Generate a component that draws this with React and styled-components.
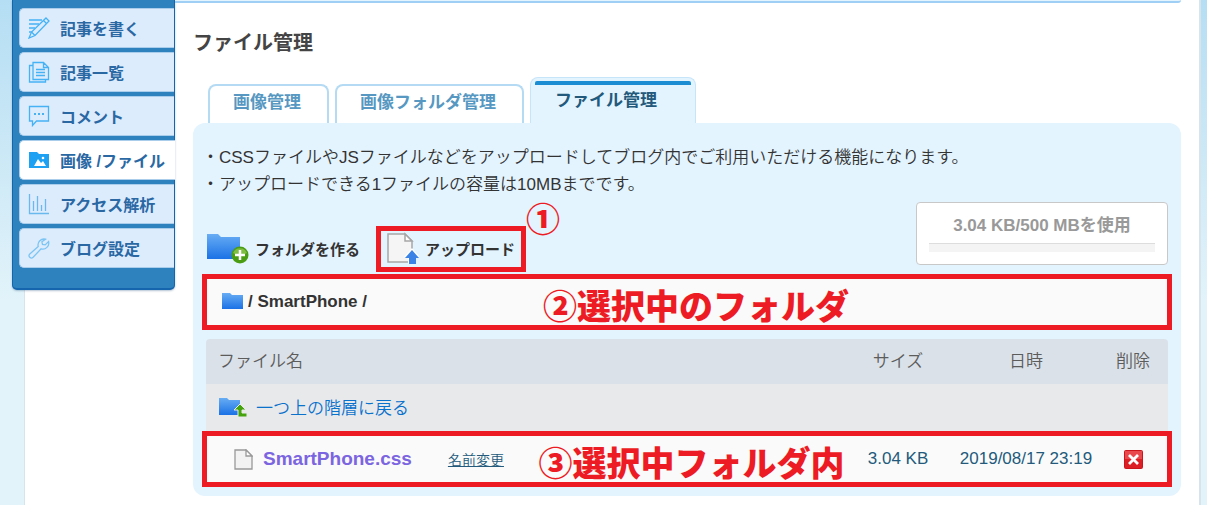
import styled, { createGlobalStyle } from "styled-components";

const GlobalStyle = createGlobalStyle`
  * {
    box-sizing: border-box;
  }
  body {
    margin: 0;
    background: #e2f3fa;
    color: #333;
    font-family: "Liberation Sans", "Noto Sans CJK JP", sans-serif;
    font-size: 17px;
    font-weight: 350;
  }
`;

const Page = styled.div`
  padding: 0 6px 0 24px;
  background: linear-gradient(#b5def4, #cbe8f6 150px, #e2f3fa 300px);
`;
const Sheet = styled.div`
  display: flex;
  align-items: flex-start;
  min-height: 100vh;
  background: #fff;
  border-right: 2px solid #d8e4ec;
  border-left: 1px solid #d8e4ec;
`;

const Sidebar = styled.nav`
  flex: none;
  width: 163px;
  margin-left: -13px;
  padding: 8px 0 20px 6px;
  background: #2e82be;
  border: solid #1565ae;
  border-width: 0 1px 2px;
  border-radius: 0 0 5px 5px;
  box-shadow: 0 1px 2px rgba(0, 60, 110, 0.3);
`;
const Menu = styled.ul`
  display: flex;
  flex-direction: column;
  gap: 4px;
  margin: 0;
  padding: 0;
  list-style: none;
`;
const MenuLink = styled.a`
  display: flex;
  align-items: center;
  gap: 10px;
  height: 40px;
  margin-right: ${(props) => (props.$active ? "-1px" : "0")};
  padding-left: 8px;
  background: ${(props) => (props.$active ? "#fff" : "#ddecfd")};
  border: solid #a9cdea;
  border-width: 1px 0 1px 1px;
  border-radius: 5px 0 0 5px;
  color: #2a68a4;
  font-size: 16px;
  font-weight: bold;
  text-decoration: none;
  white-space: nowrap;
`;

const Main = styled.main`
  flex: 1;
  min-width: 0;
  padding-right: 18px;
`;
const Banner = styled.div`
  height: 3px;
  background: #e3f4ff;
  border-bottom: 2px solid #9fcff4;
  border-radius: 0 0 5px 0;
`;
const Content = styled.div`
  padding-left: 18px;
`;
const Title = styled.h1`
  margin: 26px 0 19px;
  color: #444;
  font-size: 20px;
  font-weight: bold;
  line-height: 29px;
`;

const Tabs = styled.div`
  display: flex;
  align-items: flex-end;
  gap: 6px;
  padding-left: 15px;
`;
const Tab = styled.button`
  height: 39px;
  padding: 0 26px 8px 23px;
  background: #fff;
  border: 2px solid #b5daf3;
  border-bottom: 0;
  border-radius: 8px 8px 0 0;
  color: #5798c2;
  font: inherit;
  font-weight: bold;
  white-space: nowrap;
`;
const ActiveTab = styled(Tab)`
  height: 46px;
  padding: 3px 4px 0;
  background: #e3f4ff;
  border-color: #c6e5f9;
  border-width: 1px 1px 0;
  color: #235a7c;
`;
const TabLabel = styled.span`
  display: block;
  height: 42px;
  padding: 3px 34px 0 20px;
  border-top: 4px solid #1b8dd2;
  border-radius: 2px;
  line-height: 26px;
`;

const Panel = styled.section`
  padding: 21px 13px 9px;
  background: #e3f4ff;
  border-radius: 12px;
`;
const Notes = styled.p`
  margin: 0 -4px 4px;
  line-height: 27px;
`;
const Toolbar = styled.div`
  display: flex;
  align-items: flex-end;
  margin-bottom: 2px;
`;
const ToolButton = styled.button`
  position: relative;
  display: flex;
  align-items: center;
  gap: 6px;
  height: 46px;
  padding: 0 6px 2px;
  background: none;
  border: 5px solid ${(props) => (props.$marked ? "#ed1c24" : "transparent")};
  color: #333;
  font: inherit;
  font-size: 15px;
  font-weight: bold;
  white-space: nowrap;
`;
const CreateButton = styled(ToolButton)`
  margin-right: 5px;
  padding-left: 0;
  border-width: 0 5px 0 1px;
`;
const Usage = styled.div`
  width: 252px;
  height: 63px;
  margin: 0 0 7px auto;
  padding: 9px 12px;
  background: #fff;
  border: 1px solid #c8c8c8;
  border-radius: 4px;
  color: #999;
  font-weight: bold;
  line-height: 28px;
  text-align: center;
`;
const Meter = styled.div`
  height: 9px;
  margin-top: 3px;
  background: #f4f4f4;
  border-top: 1px solid #ddd;
`;

const PathBar = styled.div`
  position: relative;
  display: flex;
  align-items: center;
  gap: 4px;
  height: 56px;
  margin: 0 -4px 9px;
  padding-left: 15px;
  background: #fafafa;
  border: 5px solid #ed1c24;
  font-weight: bold;
`;
const Callout = styled.span`
  position: absolute;
  top: ${(props) => props.$top || "4px"};
  left: ${(props) => props.$left};
  color: #ed1c24;
  font-family: "Noto Sans CJK JP", sans-serif;
  font-size: 34px;
  font-weight: 900;
  line-height: 44px;
  white-space: nowrap;
`;

const TableWrap = styled.div`
  position: relative;
`;
const RowFrame = styled.div`
  position: absolute;
  right: -4px;
  bottom: 0;
  left: -4px;
  height: 56px;
  border: 5px solid #ed1c24;
  pointer-events: none;
`;
const Table = styled.table`
  width: 100%;
  border-collapse: collapse;
  table-layout: fixed;
`;
const HeadCell = styled.th`
  width: ${(props) => props.$width || "auto"};
  height: 45px;
  padding: 0 0 4px ${(props) => (props.$width ? "0" : "12px")};
  background: #dae1e8;
  border-radius: ${(props) => props.$radius || "0"};
  color: #5c5c5c;
  font-weight: 350;
  text-align: ${(props) => (props.$width ? "center" : "left")};
`;
const UpCell = styled.td`
  height: 47px;
  padding: 0 12px 2px;
  background: #e8e9eb;
`;
const Cell = styled.td`
  height: 56px;
  padding: 0;
  background: #fafafa;
  color: #235a7c;
  text-align: center;
  white-space: nowrap;
`;
const IconLine = styled.div`
  display: flex;
  align-items: center;
  padding-left: ${(props) => props.$indent || "0"};
`;
const UpLink = styled.a`
  margin-left: 9px;
  color: #0b72cc;
  text-decoration: none;
`;
const FileLink = styled.a`
  margin: 0 36px 0 10px;
  color: #7b65e0;
  font-size: 19px;
  font-weight: bold;
  text-decoration: none;
`;
const RenameLink = styled.a`
  color: #235a7c;
  font-size: 14px;
`;
const DeleteButton = styled.button`
  padding: 0;
  background: none;
  border: 0;
  vertical-align: middle;

  svg {
    display: block;
  }
`;

const lineIcon = {
  width: 22,
  height: 22,
  viewBox: "0 0 22 22",
  fill: "none",
  stroke: "#45b2f5",
  strokeWidth: 1.3,
  "aria-hidden": true,
};

const WriteIcon = () => (
  <svg {...lineIcon}>
    <path d="M1 3h13M1 7h10M1 11h6M1 15h3" />
    <path d="M18 1l3 3L7 18.500 1 21l2.500-6z" fill="#ddecfd" />
    <path d="M15.500 3.500l3 3M3.500 15L7 18.500" />
  </svg>
);
const ListIcon = () => (
  <svg {...lineIcon}>
    <path d="M5 18.500V1.500h10.500l5 5v12zM15.500 1.500v5h5M8 8.500h9M8 11.500h9M8 14.500h9" />
    <path d="M5 4.500H1.500v16.500h16v-2.500" />
  </svg>
);
const CommentIcon = () => (
  <svg {...lineIcon}>
    <path d="M1.500 1.500h19v14.500h-12L4.500 20.500V16h-3z" />
    <path d="M6 9h2M10 9h2M14 9h2" strokeWidth="2" />
  </svg>
);
const ImageIcon = () => (
  <svg {...lineIcon} stroke="none">
    <path d="M1 3h8l2 2h10v14H1z" fill="#1ea0f3" />
    <path d="M6 17l4-7 3 4 2-2 3 5z" fill="#fff" />
    <circle cx="15" cy="9" r="1.300" fill="#fff" />
  </svg>
);
const ChartIcon = () => (
  <svg {...lineIcon} stroke="#69b9ef">
    <path d="M1.500 1v19.500H21M5.500 8v10M9.500 3v15M13.500 12v6M17.500 6v12" />
  </svg>
);
const WrenchIcon = () => (
  <svg {...lineIcon} stroke="#7cc4f3">
    <path d="M17.500 2.200a6 6 0 0 0-7.300 7.300L1.800 17a2.300 2.300 0 0 0 3.300 3.300l8-8.500a6 6 0 0 0 7.500-7.200l-3.400 3.300-2.700-.5-.6-2.600z" />
  </svg>
);

const BlueGradient = ({ id }) => (
  <linearGradient id={id} x1="0" y1="0" x2="0" y2="1">
    <stop offset="0" stopColor="#68adf4" />
    <stop offset="1" stopColor="#1b72e6" />
  </linearGradient>
);
const AddFolderIcon = () => (
  <svg width="42" height="32" viewBox="0 0 42 32" aria-hidden="true">
    <defs>
      <BlueGradient id="folderAdd" />
    </defs>
    <path d="M0 2h11l3 3h19v22H0z" fill="url(#folderAdd)" />
    <circle cx="33" cy="23" r="8.500" fill="#4a9d13" />
    <path d="M26 21a7.500 7.500 0 0 1 14 0q-7 4-14 0" fill="#7fbd43" />
    <path d="M33 18v10M28 23h10" stroke="#fff" strokeWidth="2.500" />
  </svg>
);
const UploadIcon = () => (
  <svg width="32" height="32" viewBox="0 0 32 32" aria-hidden="true">
    <path d="M1 2h17l7 7v21H1z" fill="#f5f5f5" stroke="#a6a6a6" strokeWidth="1.500" />
    <path d="M18 2v7h7z" fill="#fff" stroke="#a6a6a6" strokeWidth="1.500" />
    <path d="M25 16l-8 9h4v7h8v-7h4z" fill="#fff" />
    <path d="M25 18l-7 8h4v6h7v-6h3z" fill="#3b84e6" />
  </svg>
);
const FolderIcon = () => (
  <svg width="22" height="18" viewBox="0 0 22 18" aria-hidden="true">
    <defs>
      <BlueGradient id="folder" />
    </defs>
    <path d="M0 0h8l2 2h11v14H0z" fill="url(#folder)" />
  </svg>
);
const UpFolderIcon = () => (
  <svg width="29" height="20" viewBox="0 0 29 20" aria-hidden="true">
    <defs>
      <BlueGradient id="folderUp" />
    </defs>
    <path d="M1 1h8l2 2h11v15H1z" fill="url(#folderUp)" />
    <path d="M22 7l-6 6h4v7h9v-4h-5v-3h4z" fill="#46a30e" stroke="#e8e9eb" />
  </svg>
);
const FileIcon = () => (
  <svg width="19" height="21" viewBox="0 0 19 21" aria-hidden="true">
    <path d="M1 1h11l6 6v13H1z" fill="#f2f2f2" stroke="#999" strokeWidth="1.300" />
    <path d="M12 1v6h6z" fill="#fff" stroke="#999" strokeWidth="1.300" />
  </svg>
);
const DeleteIcon = () => (
  <svg width="19" height="19" viewBox="0 0 19 19" aria-hidden="true">
    <rect width="19" height="19" rx="2" fill="#c9151b" />
    <rect x="1" y="1" width="17" height="17" rx="1" fill="#dc1f25" />
    <path d="M1 1h17v8H1z" fill="#e9484c" />
    <path d="M5 5l9 9M14 5l-9 9" stroke="#fff" strokeWidth="2.800" />
  </svg>
);

const menu = [
  { label: "記事を書く", Icon: WriteIcon },
  { label: "記事一覧", Icon: ListIcon },
  { label: "コメント", Icon: CommentIcon },
  { label: "画像 /ファイル", Icon: ImageIcon, active: true },
  { label: "アクセス解析", Icon: ChartIcon },
  { label: "ブログ設定", Icon: WrenchIcon },
];

const App = () => {
  return (
    <Page>
      <GlobalStyle />
      <Sheet>
        <Sidebar>
          <Menu>
            {menu.map(({ label, Icon, active }) => (
              <li key={label}>
                <MenuLink href="#" $active={active}>
                  <Icon />
                  {label}
                </MenuLink>
              </li>
            ))}
          </Menu>
        </Sidebar>

        <Main>
          <Banner />
          <Content>
            <Title>ファイル管理</Title>
            <Tabs>
              <Tab type="button">画像管理</Tab>
              <Tab type="button">画像フォルダ管理</Tab>
              <ActiveTab type="button">
                <TabLabel>ファイル管理</TabLabel>
              </ActiveTab>
            </Tabs>

            <Panel>
              <Notes>
                ・CSSファイルやJSファイルなどをアップロードしてブログ内でご利用いただける機能になります。
                <br />
                ・アップロードできる1ファイルの容量は10MBまでです。
              </Notes>

              <Toolbar>
                <CreateButton type="button">
                  <AddFolderIcon />
                  フォルダを作る
                </CreateButton>
                <ToolButton type="button" $marked>
                  <UploadIcon />
                  アップロード
                  <Callout $top="-35px" $left="calc(100% + 5px)">
                    ①
                  </Callout>
                </ToolButton>
                <Usage>
                  3.04 KB/500 MBを使用
                  <Meter />
                </Usage>
              </Toolbar>

              <PathBar>
                <FolderIcon />
                <span>/ SmartPhone /</span>
                <Callout $left="35%">②選択中のフォルダ</Callout>
              </PathBar>

              <TableWrap>
                <Table>
                  <thead>
                    <tr>
                      <HeadCell $radius="4px 0 0 0">ファイル名</HeadCell>
                      <HeadCell $width="112px">サイズ</HeadCell>
                      <HeadCell $width="144px">日時</HeadCell>
                      <HeadCell $width="70px" $radius="0 4px 0 0">削除</HeadCell>
                    </tr>
                  </thead>
                  <tbody>
                    <tr>
                      <UpCell colSpan={4}>
                        <IconLine>
                          <UpFolderIcon />
                          <UpLink href="#">一つ上の階層に戻る</UpLink>
                        </IconLine>
                      </UpCell>
                    </tr>
                    <tr>
                      <Cell>
                        <IconLine $indent="28px">
                          <FileIcon />
                          <FileLink href="#">SmartPhone.css</FileLink>
                          <RenameLink href="#">名前変更</RenameLink>
                        </IconLine>
                      </Cell>
                      <Cell>3.04 KB</Cell>
                      <Cell>2019/08/17 23:19</Cell>
                      <Cell>
                        <DeleteButton type="button" aria-label="削除">
                          <DeleteIcon />
                        </DeleteButton>
                      </Cell>
                    </tr>
                  </tbody>
                </Table>
                <RowFrame>
                  <Callout $left="calc(34% + 5px)">③選択中フォルダ内</Callout>
                </RowFrame>
              </TableWrap>
            </Panel>
          </Content>
        </Main>
      </Sheet>
    </Page>
  );
};

export default App;
